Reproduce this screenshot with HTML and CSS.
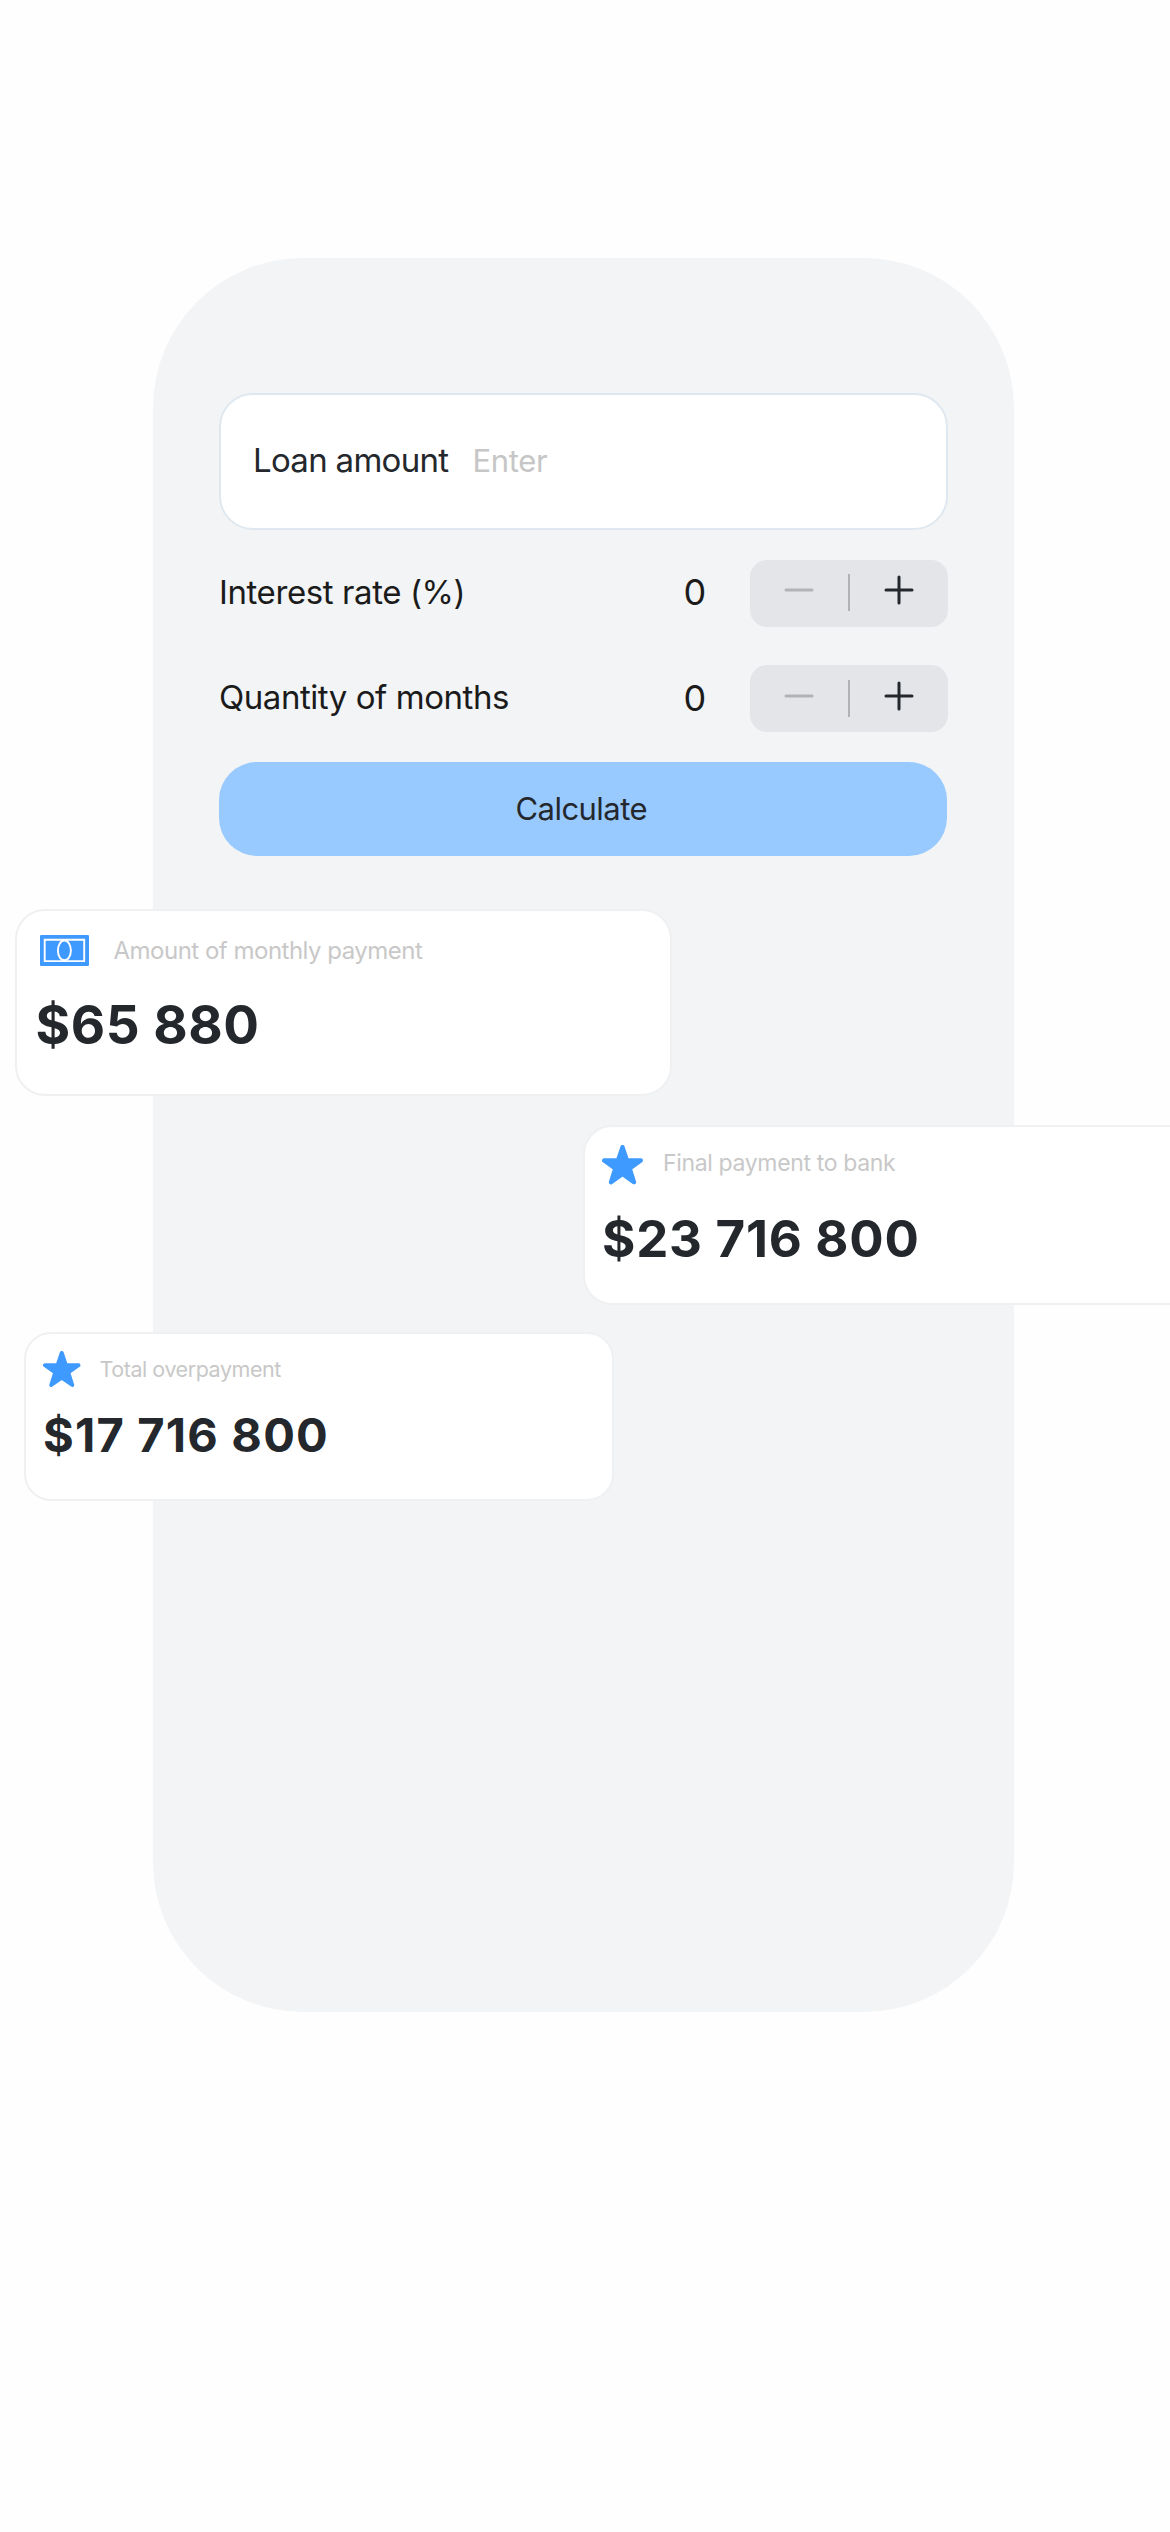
FILE: index.html
```
<!DOCTYPE html>
<html lang="en">
<head>
<meta charset="utf-8">
<title>Loan calculator</title>
<link rel="stylesheet" href="styles.css">
</head>
<body>
<main class="panel">
  <form class="form">
    <label class="field">
      <span class="field-label">Loan amount</span>
      <span class="field-placeholder">Enter</span>
    </label>
    <div class="row">
      <span class="row-label rate">Interest rate (%)</span>
      <span class="row-value">0</span>
      <div class="stepper">
        <svg class="glyph minus" viewBox="0 0 30 30"><path d="M2 15H28"/></svg>
        <span class="divider"></span>
        <svg class="glyph plus" viewBox="0 0 30 30"><path d="M2 15H28M15 2V28"/></svg>
      </div>
    </div>
    <div class="row">
      <span class="row-label">Quantity of months</span>
      <span class="row-value">0</span>
      <div class="stepper">
        <svg class="glyph minus" viewBox="0 0 30 30"><path d="M2 15H28"/></svg>
        <span class="divider"></span>
        <svg class="glyph plus" viewBox="0 0 30 30"><path d="M2 15H28M15 2V28"/></svg>
      </div>
    </div>
    <button class="calculate" type="button">Calculate</button>
  </form>
  <section class="results">
    <article class="card monthly">
      <header class="card-head">
        <svg class="money" viewBox="0 0 49 31"><rect width="49" height="31" rx="1.3" fill="#3f9aff"/><g fill="none" stroke="#fff" stroke-width="1.9"><path d="M4.7 4.8H44.2V26.1H4.7Z"/><ellipse cx="24.4" cy="15.4" rx="6.5" ry="9.9"/></g></svg>
        <span class="caption">Amount of monthly payment</span>
      </header>
      <p class="amount">$65 880</p>
    </article>
    <article class="card final">
      <header class="card-head">
        <svg class="star" viewBox="0 0 123 118"><path d="M61.5 6.5L75 46.5H116.5L83 70.5L96 111.5L61.5 87L27 111.5L40 70.5L6.5 46.5H48Z"/></svg>
        <span class="caption">Final payment to bank</span>
      </header>
      <p class="amount">$23 716 800</p>
    </article>
    <article class="card over">
      <header class="card-head">
        <svg class="star" viewBox="0 0 123 118"><path d="M61.5 6.5L75 46.5H116.5L83 70.5L96 111.5L61.5 87L27 111.5L40 70.5L6.5 46.5H48Z"/></svg>
        <span class="caption">Total overpayment</span>
      </header>
      <p class="amount">$17 716 800</p>
    </article>
  </section>
</main>
</body>
</html>
```
FILE: styles.css
```
* {
  box-sizing: border-box;
}

body {
  margin: 0;
  padding: 258px 0 0 153px;
  height: 2532px;
  overflow: hidden;
  background: #fefefe;
  font-family: "Inter", "Liberation Sans", sans-serif;
  color: #24282d;
}

.panel {
  width: 861px;
  height: 1754px;
  padding-top: 135px;
  border-radius: 150px;
  background: #f2f4f6;
}

.form {
  display: flex;
  flex-direction: column;
  width: 729px;
  margin-left: 66px;
}

.field {
  display: flex;
  align-items: center;
  height: 137px;
  padding: 0 32px 3px;
  border: 2px solid #dfe8f0;
  border-radius: 34px;
  background: #fff;
  margin-bottom: 29.5px;
}

.field-label {
  font-size: 33px;
  letter-spacing: -0.7px;
}

.field-placeholder {
  margin-left: 24px;
  font-size: 31px;
  letter-spacing: -0.34px;
  color: #c6c6c6;
}

.row {
  display: flex;
  align-items: center;
  height: 67.5px;
  margin-bottom: 37.8px;
  color: #1b1b1b;
}

.row + .calculate {
  margin-top: -8.3px;
}

.row-label {
  flex: 1;
  padding-bottom: 3px;
  font-size: 33px;
  letter-spacing: -0.45px;
}

.row-label.rate {
  letter-spacing: -0.41px;
}

.row-value {
  width: 66.5px;
  padding-bottom: 2px;
  font-size: 36px;
}

.stepper {
  display: flex;
  align-items: center;
  width: 198px;
  height: 67.5px;
  padding: 0 34.5px 6px 33.5px;
  border-radius: 17px;
  background: #e3e5e8;
}

.glyph {
  width: 30px;
  height: 30px;
  fill: none;
  stroke-width: 3;
  stroke-linecap: round;
}

.minus {
  stroke: #b2b3b6;
}

.plus {
  stroke: #24282d;
}

.divider {
  width: 2px;
  height: 37px;
  margin: 5px 34px 0 34px;
  background: #b1b2b5;
}

.calculate {
  width: 727.5px;
  height: 94.5px;
  padding: 0 3px 1px 0;
  border: 0;
  border-radius: 38px;
  background: #99caff;
  color: #24282d;
  font-family: inherit;
  font-size: 31px;
  letter-spacing: -0.55px;
}

.results {
  display: flex;
  flex-direction: column;
  width: 1170px;
  margin: 52.5px 0 0 -153px;
}

.card {
  border: 2px solid #eff0f1;
  background: #fff;
}

.card-head {
  display: flex;
  align-items: center;
}

.caption {
  color: #c8c8c8;
}

.amount {
  margin: 0;
  font-weight: 700;
  line-height: 64px;
}

.monthly {
  width: 656.5px;
  height: 187px;
  margin-left: 15px;
  padding: 24.3px 0 0 18.5px;
  border-radius: 30px;
}

.money {
  width: 49px;
  height: 31px;
  margin-left: 4px;
}

.monthly .card-head {
  height: 31px;
}

.monthly .caption {
  margin-left: 25px;
  font-size: 24px;
  letter-spacing: -0.5px;
}

.monthly .amount {
  margin-top: 26.7px;
  font-size: 53px;
  letter-spacing: 0.52px;
}

.final {
  width: 640px;
  height: 180px;
  margin: 29px 0 0 583px;
  padding: 18.5px 0 0 17px;
  border-radius: 29px;
}

.star {
  fill: #3f9aff;
  stroke: #3f9aff;
  stroke-width: 13;
  stroke-linejoin: round;
}

.final .star {
  width: 41px;
  height: 39.3px;
}

.final .card-head {
  height: 39.3px;
}

.final .caption {
  margin-left: 20px;
  padding-bottom: 4px;
  font-size: 23px;
  letter-spacing: -0.35px;
}

.final .amount {
  margin-top: 22px;
  font-size: 51px;
  letter-spacing: 0.75px;
}

.over {
  width: 590px;
  height: 169px;
  margin: 27px 0 0 24px;
  padding: 17px 0 0 17px;
  border-radius: 27px;
}

.over .card-head {
  height: 36px;
}

.over .star {
  width: 37.5px;
  height: 36px;
}

.over .caption {
  margin-left: 19px;
  font-size: 21.5px;
  letter-spacing: -0.45px;
}

.over .amount {
  margin-top: 16.5px;
  font-size: 47px;
  letter-spacing: 1.2px;
}
```
